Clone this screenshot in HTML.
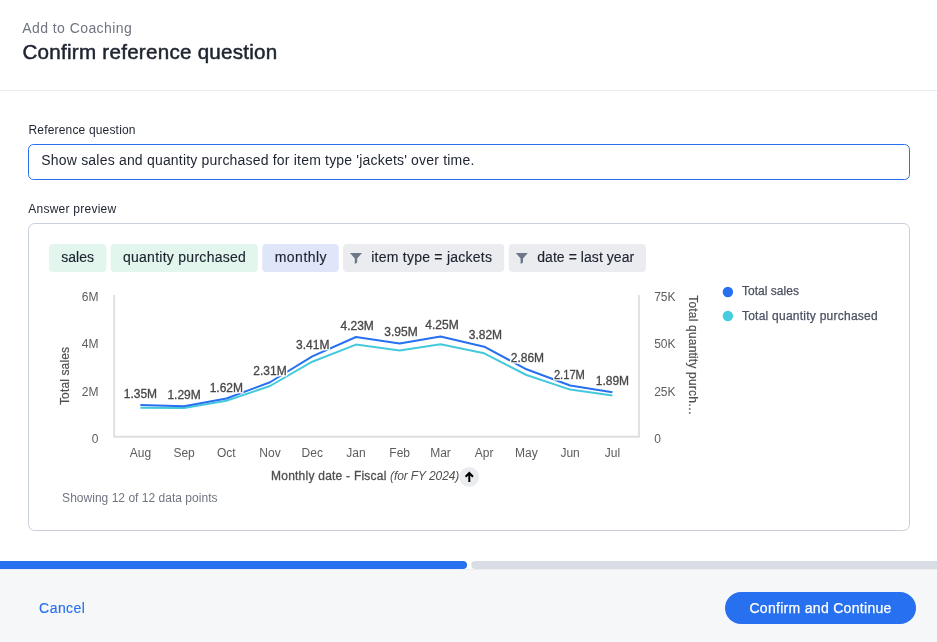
<!DOCTYPE html>
<html><head><meta charset="utf-8"><style>
html,body{margin:0;padding:0;background:#fff;width:937px;height:642px;overflow:hidden}
svg{display:block;will-change:transform;font-family:"Liberation Sans",sans-serif}
.ct text{stroke:#1d232f;stroke-width:0.15px}
</style></head><body>
<svg width="937" height="642" viewBox="0 0 937 642">
<rect x="0" y="0" width="937" height="642" fill="#fff"/>
<!-- header -->
<text x="22.3" y="33.2" font-size="14" fill="#6f7581" textLength="109.5" lengthAdjust="spacing">Add to Coaching</text>
<text x="22.5" y="59" font-size="20.6" fill="#1d232f" stroke="#1d232f" stroke-width="0.5" textLength="254.8" lengthAdjust="spacing">Confirm reference question</text>
<rect x="0" y="90" width="937" height="1" fill="#e8ebf0"/>

<!-- reference question -->
<text x="28.5" y="133.5" font-size="12" fill="#1d232f" textLength="107" lengthAdjust="spacing">Reference question</text>
<rect x="28.5" y="144.5" width="881" height="35" rx="5" fill="#fff" stroke="#2770ef" stroke-width="1"/>
<text x="41.3" y="165" font-size="14" fill="#1d232f" textLength="433" lengthAdjust="spacing">Show sales and quantity purchased for item type 'jackets' over time.</text>

<!-- answer preview -->
<text x="28.2" y="212.5" font-size="12" fill="#1d232f" textLength="88" lengthAdjust="spacing">Answer preview</text>
<rect x="28.5" y="223.5" width="881" height="307" rx="6" fill="#fff" stroke="#c9cfd8" stroke-width="1"/>

<!-- chips -->
<g class="ct" font-size="14" fill="#1d232f">
<rect x="49" y="244" width="57.4" height="28" rx="4" fill="#e2f6ee"/>
<text x="61.3" y="261.9" textLength="32.6" lengthAdjust="spacing">sales</text>
<rect x="110.6" y="244" width="147.2" height="28" rx="4" fill="#e2f6ee"/>
<text x="122.9" y="262" textLength="123" lengthAdjust="spacing">quantity purchased</text>
<rect x="262.2" y="244" width="76.6" height="28" rx="4" fill="#dfe6f9"/>
<text x="274.7" y="262" textLength="51.9" lengthAdjust="spacing">monthly</text>
<rect x="343.1" y="244" width="161.1" height="28" rx="4" fill="#eaecf0"/>
<path d="M350 253 H362 L357.2 258.4 V262.6 L354.8 264 V258.4 Z" fill="#6e7787"/>
<text x="371.2" y="262" textLength="120.8" lengthAdjust="spacing">item type = jackets</text>
<rect x="508.7" y="244" width="137.3" height="28" rx="4" fill="#eaecf0"/>
<path d="M515.8 253 H527.8 L523 258.4 V262.6 L520.6 264 V258.4 Z" fill="#6e7787"/>
<text x="537.2" y="262" textLength="97" lengthAdjust="spacing">date = last year</text>
</g>

<!-- chart axes -->
<g stroke="#dedede" stroke-width="1.8" fill="none">
<path d="M114.2 295 V436.75 H639 V295"/>
</g>
<g font-size="12" fill="#5c5c5c">
<text x="98.5" y="301" text-anchor="end">6M</text>
<text x="98.5" y="348" text-anchor="end">4M</text>
<text x="98.5" y="395.5" text-anchor="end">2M</text>
<text x="98.5" y="442.6" text-anchor="end">0</text>
<text x="654.2" y="301.4">75K</text>
<text x="654.2" y="348.4">50K</text>
<text x="654.2" y="396.1">25K</text>
<text x="654.2" y="442.6">0</text>
<g text-anchor="middle">
<text x="140.40" y="457.2">Aug</text>
<text x="184.08" y="457.2">Sep</text>
<text x="226.35" y="457.2">Oct</text>
<text x="270.02" y="457.2">Nov</text>
<text x="312.29" y="457.2">Dec</text>
<text x="355.97" y="457.2">Jan</text>
<text x="399.65" y="457.2">Feb</text>
<text x="440.51" y="457.2">Mar</text>
<text x="484.19" y="457.2">Apr</text>
<text x="526.45" y="457.2">May</text>
<text x="570.13" y="457.2">Jun</text>
<text x="612.40" y="457.2">Jul</text>
</g>
<text transform="translate(69.2 376) rotate(-90)" text-anchor="middle" fill="#4f4f4f" stroke="#4f4f4f" stroke-width="0.2" textLength="58" lengthAdjust="spacing">Total sales</text>
<text transform="translate(688.6 295.3) rotate(90)" fill="#4f4f4f" stroke="#4f4f4f" stroke-width="0.2" textLength="119.7" lengthAdjust="spacing">Total quantity purch…</text>
</g>

<!-- lines -->
<polyline fill="none" stroke="#44c9dc" stroke-width="2" stroke-linejoin="round" points="140.40,407.80 184.08,407.90 226.35,400.80 270.02,386.00 312.29,361.70 355.97,344.60 399.65,350.40 440.51,344.20 484.19,353.30 526.45,375.00 570.13,389.60 612.40,395.60"/>
<polyline fill="none" stroke="#2770ef" stroke-width="2" stroke-linejoin="round" points="140.40,404.88 184.08,406.30 226.35,398.52 270.02,382.26 312.29,356.34 355.97,337.01 399.65,343.61 440.51,336.54 484.19,346.67 526.45,369.30 570.13,385.56 612.40,392.16"/>

<!-- data labels -->
<g font-size="12" text-anchor="middle">
<g fill="#fff" stroke="#fff" stroke-width="3" stroke-linejoin="round">
<text x="140.40" y="397.58">1.35M</text>
<text x="184.08" y="399.00">1.29M</text>
<text x="226.35" y="392.2">1.62M</text>
<text x="270.02" y="374.96">2.31M</text>
<text x="312.8" y="349.04">3.41M</text>
<text x="357.17" y="329.71">4.23M</text>
<text x="401" y="336.31">3.95M</text>
<text x="442.01" y="329.24">4.25M</text>
<text x="485.39" y="339.37">3.82M</text>
<text x="527.45" y="362.00">2.86M</text>
<text x="569.4" y="379.2" textLength="31" lengthAdjust="spacingAndGlyphs">2.17M</text>
<text x="612.40" y="384.86">1.89M</text>
</g>
<g fill="#474747" stroke="#474747" stroke-width="0.3">
<text x="140.40" y="397.58">1.35M</text>
<text x="184.08" y="399.00">1.29M</text>
<text x="226.35" y="392.2">1.62M</text>
<text x="270.02" y="374.96">2.31M</text>
<text x="312.8" y="349.04">3.41M</text>
<text x="357.17" y="329.71">4.23M</text>
<text x="401" y="336.31">3.95M</text>
<text x="442.01" y="329.24">4.25M</text>
<text x="485.39" y="339.37">3.82M</text>
<text x="527.45" y="362.00">2.86M</text>
<text x="569.4" y="379.2" textLength="31" lengthAdjust="spacingAndGlyphs">2.17M</text>
<text x="612.40" y="384.86">1.89M</text>
</g>
</g>

<!-- x axis title -->
<text x="271" y="480.2" font-size="12" fill="#4f4f4f" stroke="#4f4f4f" stroke-width="0.3" textLength="115.4" lengthAdjust="spacing">Monthly date - Fiscal</text>
<text x="390" y="480.2" font-size="12" font-style="italic" fill="#4f4f4f" textLength="69.3" lengthAdjust="spacing">(for FY 2024)</text>
<circle cx="469.2" cy="477" r="10" fill="#eaecf0"/>
<path d="M469.3 482 V473.2 M465.6 476.8 L469.3 473 L473 476.8" fill="none" stroke="#000" stroke-width="2"/>

<text x="62.1" y="502.2" font-size="12" fill="#6f7581" textLength="155.4" lengthAdjust="spacing">Showing 12 of 12 data points</text>

<!-- legend -->
<circle cx="727.9" cy="292" r="5.2" fill="#2770ef"/>
<circle cx="727.9" cy="316" r="5.2" fill="#47cce0"/>
<g font-size="12" fill="#4a5060" stroke="#4a5060" stroke-width="0.25">
<text x="741.9" y="295.4" textLength="57" lengthAdjust="spacing">Total sales</text>
<text x="741.9" y="319.5" textLength="135.8" lengthAdjust="spacing">Total quantity purchased</text>
</g>

<!-- progress -->
<rect x="0" y="569" width="937" height="73" fill="#f6f7f9"/>
<rect x="0" y="569" width="937" height="1" fill="#eceef2"/>
<rect x="-10" y="561" width="477" height="8" rx="4" fill="#2770ef"/>
<rect x="471.2" y="561" width="480" height="8" rx="4" fill="#d9dde5"/>

<!-- footer -->
<text x="39.1" y="612.8" font-size="14" fill="#2770ef" stroke="#2770ef" stroke-width="0.15" textLength="45.8" lengthAdjust="spacing">Cancel</text>
<rect x="725" y="592" width="191" height="32" rx="16" fill="#2770ef"/>
<text x="749.4" y="613" font-size="14" fill="#fff" stroke="#fff" stroke-width="0.25" textLength="142" lengthAdjust="spacing">Confirm and Continue</text>
</svg>
</body></html>
